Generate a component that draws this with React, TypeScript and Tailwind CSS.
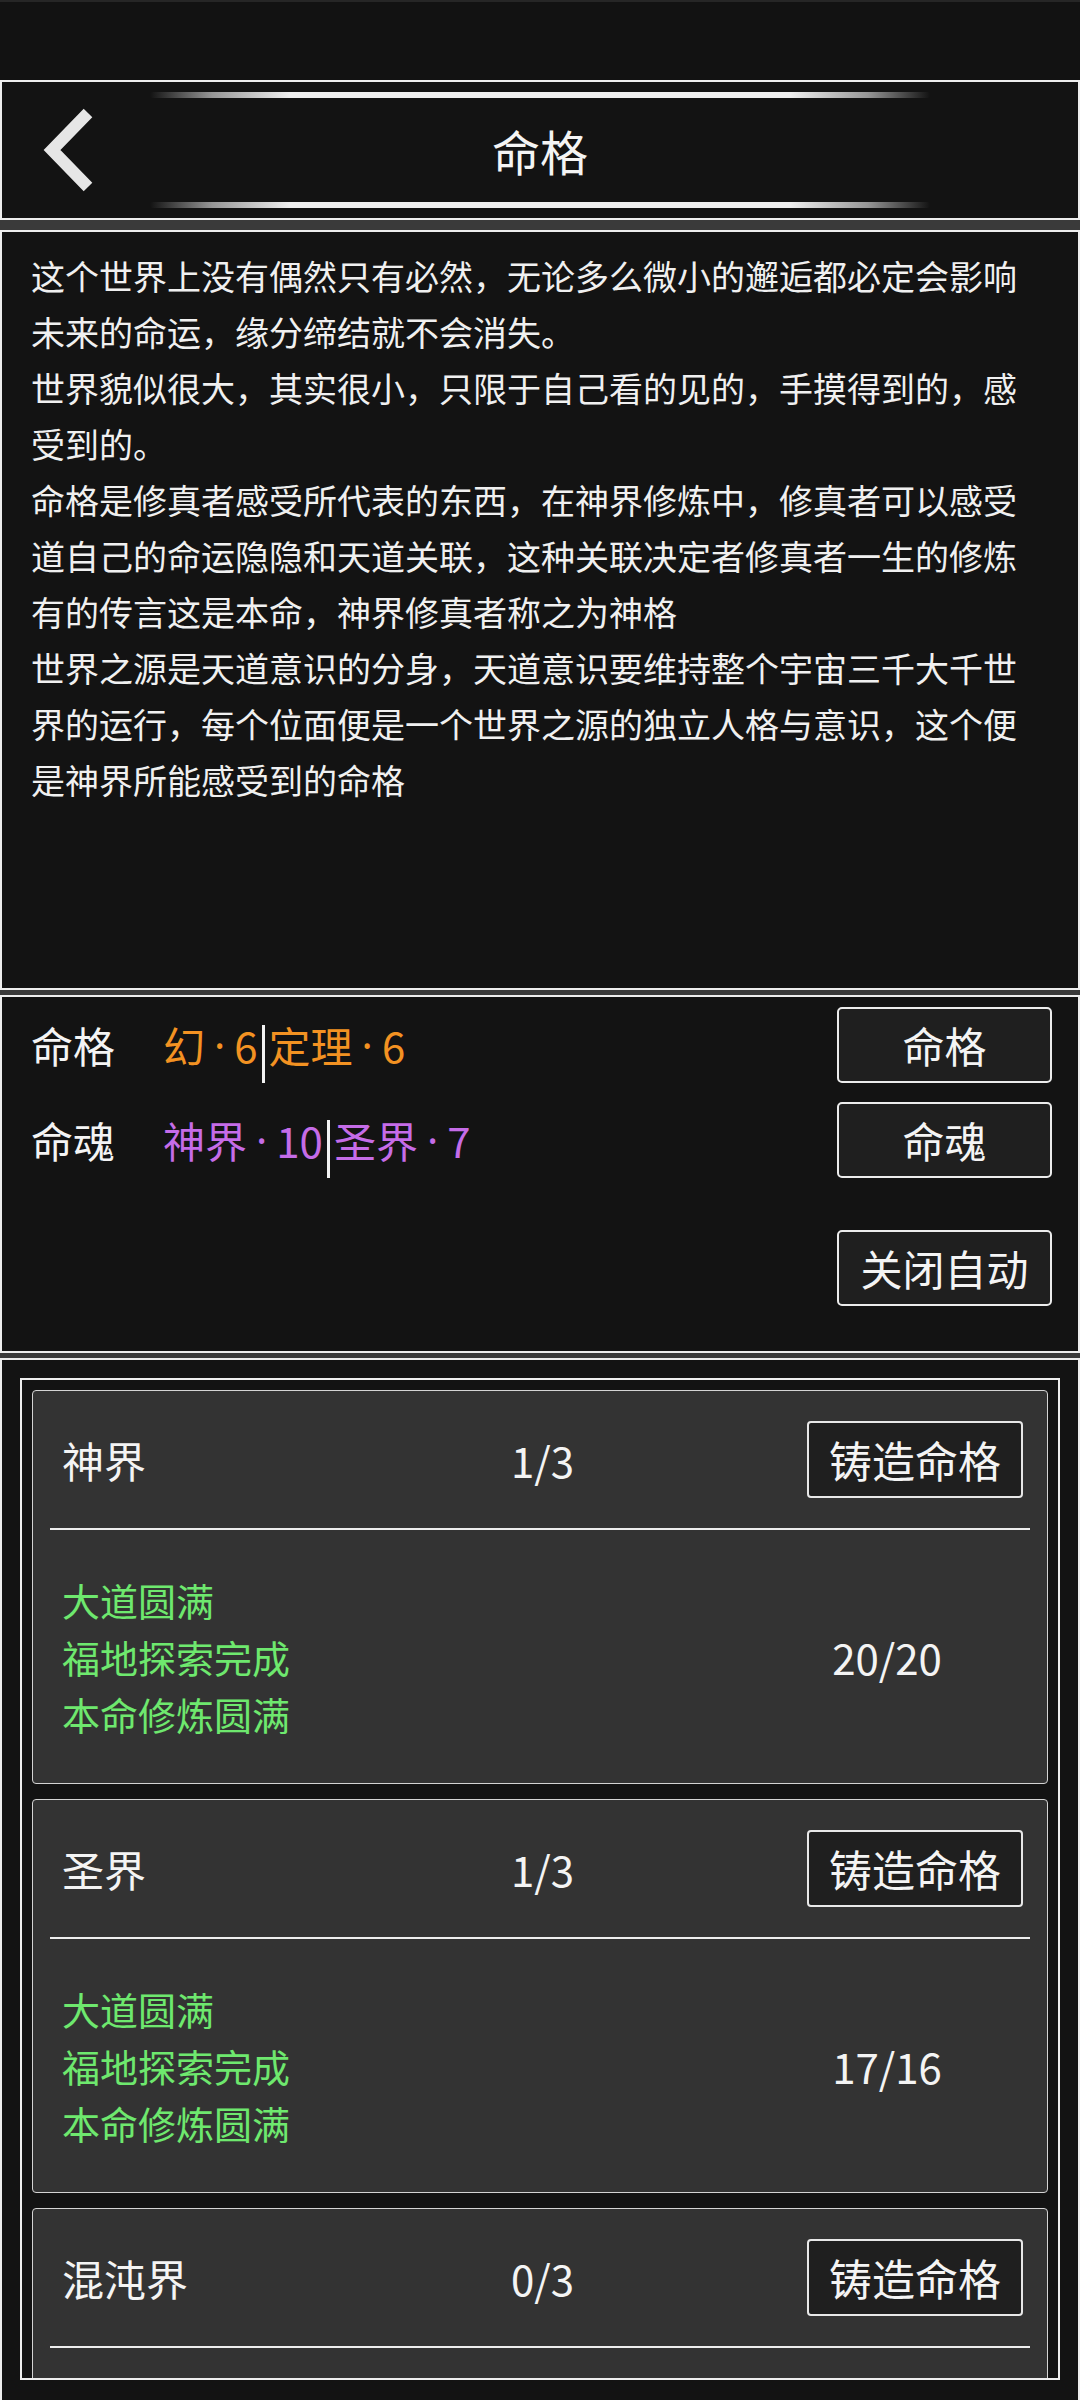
import React from 'react';

const FONT = "font-['Noto_Sans_CJK_SC','Noto_Sans',sans-serif]";

const intro = [
  '这个世界上没有偶然只有必然，无论多么微小的邂逅都必定会影响未来的命运，缘分缔结就不会消失。',
  '世界貌似很大，其实很小，只限于自己看的见的，手摸得到的，感受到的。',
  '命格是修真者感受所代表的东西，在神界修炼中，修真者可以感受道自己的命运隐隐和天道关联，这种关联决定者修真者一生的修炼有的传言这是本命，神界修真者称之为神格',
  '世界之源是天道意识的分身，天道意识要维持整个宇宙三千大千世界的运行，每个位面便是一个世界之源的独立人格与意识，这个便是神界所能感受到的命格',
];

const realms = [
  { name: '神界', count: '1/3', score: '20/20' },
  { name: '圣界', count: '1/3', score: '17/16' },
  { name: '混沌界', count: '0/3', score: '12/12' },
];

const conditions = ['大道圆满', '福地探索完成', '本命修炼圆满'];

// glowing bar above / below the title
const GlowLine = () => (
  <div className="mx-auto h-[6px] w-[780px] rounded-full bg-[linear-gradient(90deg,rgba(238,238,238,0)_0%,rgba(238,238,238,0.6)_8%,#efefef_18%,#efefef_82%,rgba(238,238,238,0.6)_92%,rgba(238,238,238,0)_100%)]" />
);

const BackIcon = () => (
  <svg width="80" height="100" viewBox="0 0 80 100" className="block">
    <polyline points="66,13 30,50 66,87" fill="none" stroke="#e6e6e6" strokeWidth="12" strokeLinejoin="miter" />
  </svg>
);

const Sep = () => <span className="mx-[4px] mt-[18px] inline-block h-[58px] w-[3px] bg-[#f2f2f2]" />;

// value like 幻·6 with a narrow latin middle dot
const Val = ({ name, n }: { name: string; n: string }) => (
  <span className="flex items-center">
    <span>{name}</span>
    <span className="mx-[9px] font-['Noto_Sans',sans-serif]">·</span>
    <span>{n}</span>
  </span>
);

const StatButton = ({ label }: { label: string }) => (
  <button className="flex h-[76px] w-[215px] items-center justify-center rounded-[5px] border-2 border-[#ececec] bg-[#1f1f1f] text-[42px] leading-none text-[#f4f4f4]">
    {label}
  </button>
);

const RealmCard = ({ name, count, score }: { name: string; count: string; score: string }) => (
  <div className="flex h-[394px] shrink-0 flex-col rounded-[4px] border border-[#d4d4d4] bg-[#333333]">
    <div className="grid h-[137px] shrink-0 grid-cols-3 items-center pl-[29px] pr-[24px]">
      <span className="text-[42px] text-[#f4f4f4]">{name}</span>
      <span className="text-center text-[42px] text-[#f4f4f4]">{count}</span>
      <div className="flex justify-end">
        <button className="flex h-[77px] w-[216px] items-center justify-center rounded-[4px] border-2 border-[#e8e8e8] bg-[#1f1f1f] text-[43px] leading-none text-[#f4f4f4]">
          铸造命格
        </button>
      </div>
    </div>
    <div className="mx-[17px] h-[2px] shrink-0 bg-[#eeeeee]" />
    <div className="grid flex-1 grid-cols-[1fr_272px] items-center pl-[29px] pr-[24px]">
      <div className="flex flex-col text-[38px] leading-[57px] text-[#6ee86e]">
        {conditions.map((c) => (
          <span key={c}>{c}</span>
        ))}
      </div>
      <span className="text-center text-[42px] text-[#f4f4f4]">{score}</span>
    </div>
  </div>
);

export default function App() {
  return (
    <div className={`flex min-h-[2400px] w-[1080px] flex-col overflow-hidden bg-[#3a3a3a] ${FONT}`}>
      {/* status area */}
      <div className="h-[80px] shrink-0 border-t-2 border-[#262626] bg-[#121212]" />

      {/* title bar */}
      <div className="flex h-[140px] shrink-0 flex-col border-2 border-[#eeeeee] bg-[#131313] pb-[10px] pt-[10px]">
        <GlowLine />
        <div className="grid flex-1 grid-cols-[150px_1fr_150px] items-center">
          <div className="pl-[20px]">
            <BackIcon />
          </div>
          <h1 className="text-center text-[48px] leading-none text-[#f4f4f4]">命格</h1>
          <div />
        </div>
        <GlowLine />
      </div>

      {/* description */}
      <div className="mt-[10px] h-[760px] shrink-0 border-2 border-[#eeeeee] bg-[#131313] pl-[29px] pr-[40px] pt-[16px] text-[34px] leading-[56px] text-[#f0f0f0]">
        {intro.map((p, i) => (
          <p key={i}>{p}</p>
        ))}
      </div>

      {/* fate / soul summary */}
      <div className="mt-[5px] flex h-[358px] shrink-0 flex-col border-2 border-[#eeeeee] bg-[#131313] pl-[29px] pr-[26px] pt-[10px]">
        <div className="flex h-[76px] items-center justify-between">
          <div className="flex items-center text-[42px] leading-none">
            <span className="w-[132px] text-[#f4f4f4]">命格</span>
            <span className="flex items-center text-[#f39222]">
              <Val name="幻" n="6" />
              <Sep />
              <Val name="定理" n="6" />
            </span>
          </div>
          <StatButton label="命格" />
        </div>
        <div className="mt-[19px] flex h-[76px] items-center justify-between">
          <div className="flex items-center text-[42px] leading-none">
            <span className="w-[132px] text-[#f4f4f4]">命魂</span>
            <span className="flex items-center text-[#c56ce8]">
              <Val name="神界" n="10" />
              <Sep />
              <Val name="圣界" n="7" />
            </span>
          </div>
          <StatButton label="命魂" />
        </div>
        <div className="mt-[52px] flex h-[78px] justify-end">
          <StatButton label="关闭自动" />
        </div>
      </div>

      {/* realm list */}
      <div className="mt-[5px] flex-1 border-2 border-b-0 border-[#eeeeee] bg-[#131313] px-[18px] pb-[20px] pt-[18px]">
        <div className="flex h-[1002px] flex-col gap-[15px] overflow-hidden border-2 border-[#eeeeee] p-[10px]">
          {realms.map((r) => (
            <RealmCard key={r.name} {...r} />
          ))}
        </div>
      </div>
    </div>
  );
}
